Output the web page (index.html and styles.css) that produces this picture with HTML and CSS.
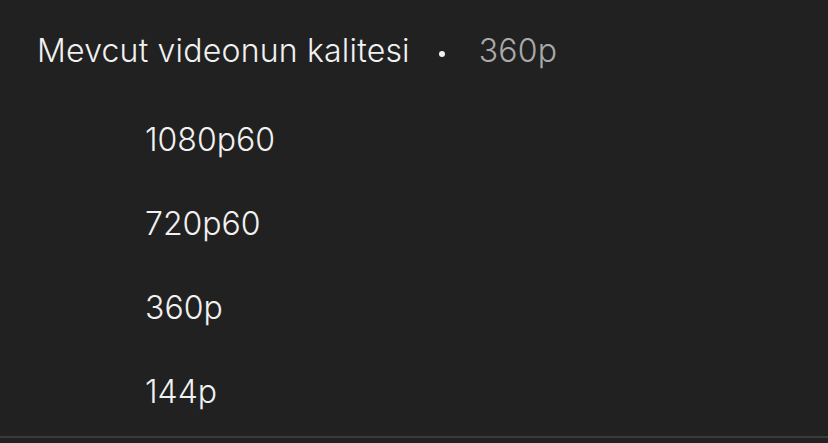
FILE: index.html
```html
<!DOCTYPE html>
<html>
<head>
<meta charset="utf-8">
<link rel="stylesheet" href="styles.css">
</head>
<body>
<div class="sheet">
  <div class="header">
    <span class="title">Mevcut videonun kalitesi</span>
    <span class="dot"></span>
    <span class="current">360p</span>
  </div>
  <ul class="options">
    <li class="option">1080p60</li>
    <li class="option">720p60</li>
    <li class="option">360p</li>
    <li class="option">144p</li>
  </ul>
  <div class="divider"></div>
</div>
</body>
</html>
```
FILE: styles.css
```css
html, body {
  margin: 0;
  padding: 0;
  background: #212121;
}
body {
  font-family: Inter, "Noto Sans", sans-serif;
  color: #f1f1f1;
  width: 828px;
  height: 443px;
  overflow: hidden;
}
.sheet {
  display: flex;
  flex-direction: column;
}
.header {
  display: flex;
  align-items: center;
  height: 93px;
  padding-top: 4px;
  padding-left: 37px;
  font-size: 32px;
  font-weight: 300;
  letter-spacing: 0.2px;
}
.title {
  color: #f1f1f1;
}
.dot {
  width: 6px;
  height: 6px;
  border-radius: 50%;
  background: #f1f1f1;
  margin: 6px 34px 0 29px;
}
.current {
  color: #aaaaaa;
}
.options {
  list-style: none;
  margin: 0;
  padding: 0;
}
.option {
  height: 84px;
  display: flex;
  align-items: center;
  padding-left: 145px;
  font-size: 32px;
  font-weight: 300;
}
.divider {
  height: 2px;
  background: #3a3a3a;
  margin-top: 3px;
}
```
